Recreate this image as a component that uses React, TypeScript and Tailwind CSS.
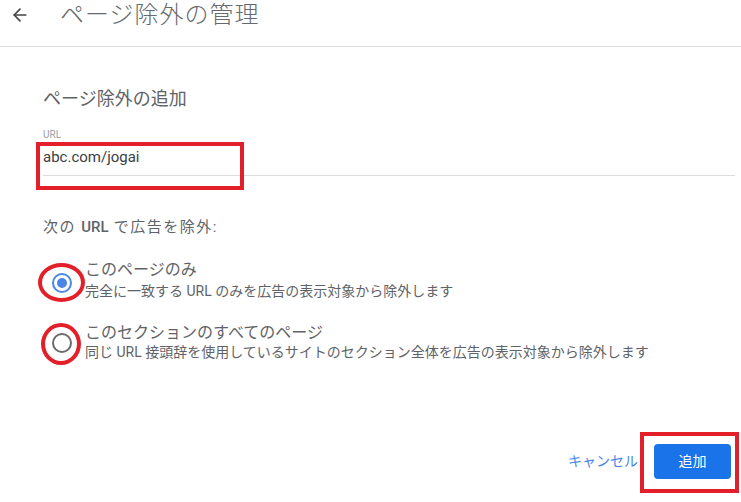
import { ArrowLeft } from "lucide-react";

const font = { fontFamily: "Roboto, 'Noto Sans CJK JP', sans-serif" };

function Radio({ checked }: { checked: boolean }) {
    return (
        <div
            className={
                "flex h-[20px] w-[20px] shrink-0 items-center justify-center rounded-full border-2 " +
                (checked ? "border-[#4a86e8]" : "border-[#6b6b6b]")
            }
        >
            {checked && <div className="h-[10px] w-[10px] rounded-full bg-[#4a86e8]" />}
        </div>
    );
}

export default function App() {
    return (
        <div className="relative h-[502px] w-[741px] overflow-hidden bg-white" style={font}>
            <div className="flex h-[47px] items-start border-b border-[#dadce0] pt-[1px]">
                <div className="flex h-[28px] items-center">
                    <ArrowLeft size={20} strokeWidth={2} className="ml-[10px] text-[#444]" />
                    <span className="ml-[30px] text-[24px] leading-[28px] tracking-[1px] font-light text-[#666a6e]">
                        ページ除外の管理
                    </span>
                </div>
            </div>

            <div className="pl-[43px] pr-[6px]">
                <h2 className="mt-[40px] text-[18px] leading-[24px] text-[#5f6368]">ページ除外の追加</h2>

                <div className="mt-[17px] text-[10px] leading-[14px] text-[#9aa0a6]">URL</div>
                <div className="mt-[5px] border-b border-[#dadce0] pb-[8px] text-[15px] leading-[20px] text-[#3c4043]">
                    abc.com/jogai
                </div>

                <div className="mt-[41px] text-[15px] leading-[20px] tracking-[1.5px] text-[#5f6368]">
                    次の <span className="font-medium tracking-normal">URL</span> で広告を除外:
                </div>

                <div className="mt-[23px] flex items-start">
                    <div className="ml-[9px] mt-[13px]">
                        <Radio checked />
                    </div>
                    <div className="ml-[13px]">
                        <div className="text-[16px] leading-[20px] text-[#5f6368]">このページのみ</div>
                        <div className="mt-[2px] text-[14px] leading-[18px] text-[#5f6368]">
                            完全に一致する URL のみを広告の表示対象から除外します
                        </div>
                    </div>
                </div>

                <div className="mt-[23px] flex items-start">
                    <div className="ml-[9px] mt-[10px]">
                        <Radio checked={false} />
                    </div>
                    <div className="ml-[13px]">
                        <div className="text-[16px] leading-[20px] text-[#5f6368]">このセクションのすべてのページ</div>
                        <div className="text-[14px] leading-[18px] text-[#5f6368]">
                            同じ URL 接頭辞を使用しているサイトのセクション全体を広告の表示対象から除外します
                        </div>
                    </div>
                </div>

                <div className="mt-[83px] flex items-center justify-end pr-[4px]">
                    <button className="text-[14px] text-[#4a86e8]">キャンセル</button>
                    <button className="ml-[16px] h-[35px] w-[77px] rounded-[4px] bg-[#1a73e8] text-[14px] text-white">
                        追加
                    </button>
                </div>
            </div>

            {/* red annotations */}
            <div className="absolute left-[36px] top-[142px] h-[48px] w-[208px] border-4 border-[#e3202a]" />
            <div className="absolute left-[38px] top-[263px] h-[39px] w-[47px] rounded-[50%] border-4 border-[#e3202a]" />
            <div className="absolute left-[41px] top-[323px] h-[42px] w-[40px] rounded-[50%] border-4 border-[#e3202a]" />
            <div className="absolute left-[640px] top-[432px] h-[61px] w-[99px] border-4 border-[#e3202a]" />
        </div>
    );
}
